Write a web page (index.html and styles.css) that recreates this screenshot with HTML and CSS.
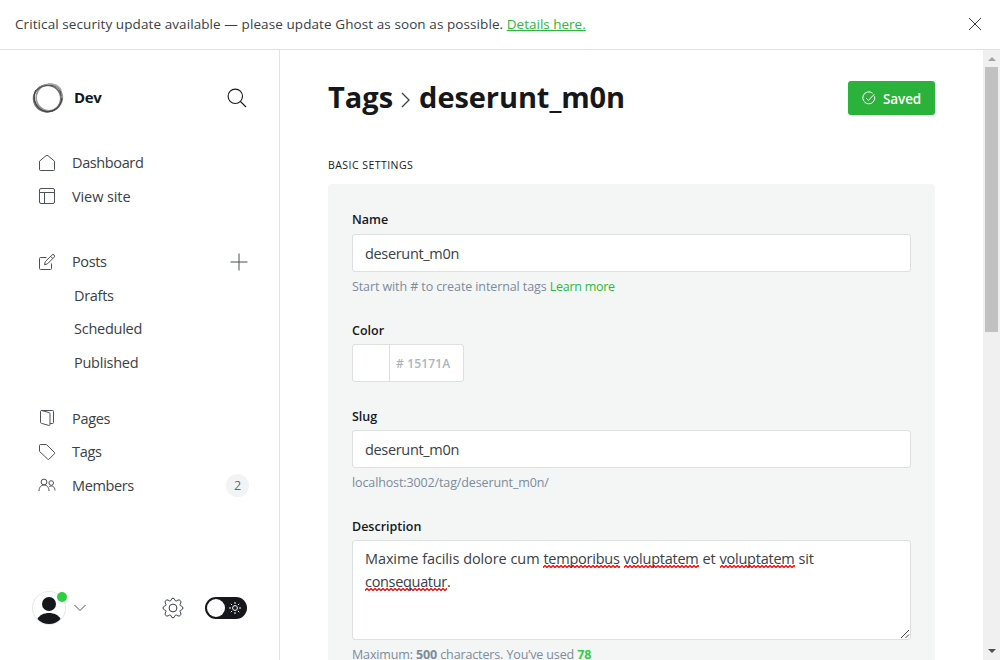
FILE: index.html
```html
<!DOCTYPE html>
<html lang="en">
<head>
<meta charset="utf-8">
<title>Tags - deserunt_m0n</title>
<link rel="stylesheet" href="styles.css">
</head>
<body>
<div class="app">
  <header class="notice">
    <p class="notice-text"><span class="notice-copy">Critical security update available — please update Ghost as soon as possible.</span> <a class="notice-link" href="#">Details here.</a></p>
    <svg class="notice-close" viewBox="0 0 14 14"><path d="M1 1l12 12M13 1L1 13"/></svg>
  </header>
  <div class="body">
    <nav class="sidebar">
      <div class="site">
        <svg class="site-logo" viewBox="0 0 32 32" fill="none">
          <ellipse cx="15.500" cy="16.300" rx="13.600" ry="13.200" stroke="#666" stroke-width="1.600"/>
          <ellipse cx="15" cy="16.600" rx="13.600" ry="13.400" stroke="#777" stroke-width="1.300"/>
          <ellipse cx="17.300" cy="15.500" rx="13" ry="13.300" stroke="#999" stroke-width="1.600" transform="rotate(30 17.300 15.500)"/>
          <path d="M4 8C-1 17 5 28 14 29.500C22 30.500 29 25 30 16" stroke="#444" stroke-width="1.300"/>
          <path d="M5 8C11 2 18 3 23 4C27 5 29 9 29 14" stroke="#555" stroke-width="1.100"/>
          <path d="M16 2C22 1.500 26 3.500 29 8" stroke="#aaa" stroke-width="1.800"/>
        </svg>
        <span class="site-name">Dev</span>
        <svg class="icon search" viewBox="0 0 20 20"><circle cx="8.300" cy="8.300" r="7.200"/><path d="M13.500 13.500l5.500 5.500"/></svg>
      </div>
      <ul class="nav">
        <li class="nav-item"><svg class="icon" viewBox="0 0 18 18"><path d="M1.500 7.200v8.300a1 1 0 0 0 1 1h13a1 1 0 0 0 1-1V7.200L10 1.700a1.500 1.500 0 0 0-2 0z"/></svg><span class="t-dashboard">Dashboard</span></li>
        <li class="nav-item"><svg class="icon" viewBox="0 0 18 18"><rect x="1.500" y="1.500" width="15" height="15" rx="1.500"/><path d="M1.500 5.500h15M6.500 5.500v11"/></svg><span class="t-view">View site</span></li>
      </ul>
      <ul class="nav">
        <li class="nav-item"><svg class="icon" viewBox="0 0 18 18"><path d="M8.500 4.500h-6a1 1 0 0 0-1 1v10a1 1 0 0 0 1 1h10a1 1 0 0 0 1-1v-5"/><path d="M6.500 11.700l.700-3 6.700-6.700a1.400 1.400 0 0 1 2.200 2.200l-6.700 6.700zM12.600 3.300l2.200 2.200"/></svg><span class="t-posts">Posts</span><svg class="icon plus" viewBox="0 0 18 18"><path d="M9 .500v17M.500 9h17"/></svg></li>
        <li class="nav-item sub"><span class="t-drafts">Drafts</span></li>
        <li class="nav-item sub"><span class="t-scheduled">Scheduled</span></li>
        <li class="nav-item sub"><span class="t-published">Published</span></li>
      </ul>
      <ul class="nav">
        <li class="nav-item"><svg class="icon" viewBox="0 0 18 18"><path d="M3.500 1.500h11a1 1 0 0 1 1 1v11a1 1 0 0 1-1 1h-2.500M3.500 1.500a1 1 0 0 0-1 1v10.800a1 1 0 0 0 .8 1l7.500 2.100a1 1 0 0 0 1.200-1V4.600a1 1 0 0 0-.8-1z"/></svg><span class="t-pages">Pages</span></li>
        <li class="nav-item"><svg class="icon" viewBox="0 0 18 18"><path d="M1.500 2.500a1 1 0 0 1 1-1H8a1 1 0 0 1 .7.300l7.700 7.600a1 1 0 0 1 0 1.400l-5.300 5.300a1 1 0 0 1-1.400 0L1.800 8.700a1 1 0 0 1-.3-.700z"/></svg><span class="t-tags">Tags</span></li>
        <li class="nav-item"><svg class="icon" viewBox="0 0 18 18"><circle cx="6" cy="6" r="2.900"/><circle cx="13.200" cy="7" r="2.300"/><path d="M1 15c0-3.800 2.200-6 5-6s5 2.200 5 6M11.300 10.600c3-1.700 5.700.400 5.700 3.900"/></svg><span class="t-members">Members</span><span class="count">2</span></li>
      </ul>
      <div class="account">
        <div class="avatar">
          <svg class="avatar-art" viewBox="0 0 34 34"><circle cx="17" cy="17" r="16.500" fill="#fff" stroke="#e5e7e9"/><circle cx="17" cy="13" r="7" fill="#15171a"/><path d="M5.500 28C9 20 25 20 28.500 28Q24 33 17 33T5.500 28z" fill="#15171a"/></svg>
          <span class="avatar-dot"></span>
        </div>
        <svg class="icon chevron" viewBox="0 0 12 8"><path d="M.500 1l5.500 5.500L11.500 1"/></svg>
        <svg class="icon gear" viewBox="0 0 22 22"><circle cx="11" cy="11" r="3.900"/><path d="M9.200 2.900Q9.500 1.200 11 1.200T12.800 2.900Q13.200 4.400 14.600 3.900L15.900 3.100Q17.300 2.500 18.300 3.600T18.700 6.100Q17.500 7.600 18.300 8.600L19.700 9.200Q20.900 9.700 20.900 11T19.700 12.800L18.300 13.400Q17.500 14.400 18.700 15.900Q19.300 17.300 18.300 18.400T15.900 18.900L14.600 18.100Q13.200 17.600 12.800 19.100Q12.500 20.800 11 20.800T9.200 19.100Q8.800 17.600 7.400 18.100L6.100 18.900Q4.700 19.500 3.700 18.400T3.300 15.900Q4.500 14.400 3.700 13.400L2.300 12.800Q1.100 12.300 1.100 11T2.300 9.200L3.700 8.600Q4.500 7.600 3.300 6.100Q2.700 4.700 3.700 3.600T6.100 3.100L7.400 3.900Q8.800 4.400 9.200 2.900z"/></svg>
        <div class="toggle"><span class="knob"></span><svg class="sun" viewBox="0 0 14 14"><circle cx="7" cy="7" r="2.400"/><path d="M7 1v2M7 11v2M1 7h2M11 7h2M2.800 2.800l1.300 1.300M9.900 9.900l1.300 1.300M11.200 2.800L9.900 4.100M4.100 9.900l-1.300 1.300"/></svg></div>
      </div>
    </nav>
    <main class="main">
      <div class="title-row">
        <h1 class="title"><span class="title-tags">Tags</span><svg class="crumb" viewBox="0 0 10 16"><path d="M1 1l7 7-7 7"/></svg><span class="title-name">deserunt_m0n</span></h1>
        <button class="save"><svg class="check" viewBox="0 0 14 14"><path d="M12.600 5.300A6 6 0 1 1 10.600 2.200M4 7l2.400 2.400 6-6.200"/></svg><span class="save-text">Saved</span></button>
      </div>
      <h4 class="section">BASIC SETTINGS</h4>
      <form class="panel">
        <label class="label l-name">Name</label>
        <div class="input"><span class="value">deserunt_m0n</span></div>
        <p class="hint"><span class="hint-start">Start with # to create internal tags</span> <a class="learn" href="#">Learn more</a></p>
        <label class="label l-color">Color</label>
        <div class="color"><span class="swatch"></span><span class="hex"># 15171A</span></div>
        <label class="label l-slug">Slug</label>
        <div class="input"><span class="value">deserunt_m0n</span></div>
        <p class="hint"><span class="hint-url">localhost:3002/tag/deserunt_m0n/</span></p>
        <label class="label l-desc">Description</label>
        <div class="textarea">
          <div class="line1">Maxime facilis dolore cum <span class="typo">temporibus</span> <span class="typo">voluptatem</span> et <span class="typo">voluptatem</span> sit</div>
          <div class="line2"><span class="typo">consequatur</span>.</div>
          <svg class="grip" viewBox="0 0 10 10"><path d="M1 9l8-8M5.500 9L9 5.500"/></svg>
        </div>
        <p class="hint last"><span class="hint-max">Maximum: <b>500</b> characters. You’ve used <b class="used">78</b></span></p>
      </form>
    </main>
    <div class="scrollbar"><span class="arrow up"></span><span class="thumb"></span><span class="arrow down"></span></div>
  </div>
</div>
</body>
</html>
```
FILE: styles.css
```css
* { box-sizing: border-box; }
body { margin: 0; font-family: "Open Sans", "Noto Sans", sans-serif; color: #394047; background: #fff; }
p, h1, h4, ul { margin: 0; padding: 0; }
ul { list-style: none; }
span, label, a { white-space: nowrap; }
.app { display: flex; flex-direction: column; width: 1000px; height: 660px; overflow: hidden; }
.notice { flex: none; display: flex; align-items: center; justify-content: space-between; height: 50px; padding: 0 18px 1px 15px; border-bottom: 1px solid #dfe1e3; font-size: 13.5px; }
.notice-text { line-height: 20px; white-space: nowrap; }
.notice-copy { letter-spacing: 0.087px; }
.notice-link { color: #2db83d; }
.notice-close { width: 14px; height: 14px; stroke: #394047; stroke-width: 1; fill: none; }
.body { flex: 1; display: flex; min-height: 0; }
.icon { flex: none; width: 18px; height: 18px; fill: none; stroke: #4b5157; stroke-width: 1; stroke-linejoin: round; }

.sidebar { flex: none; display: flex; flex-direction: column; width: 280px; border-right: 1px solid #e1e4e6; }
.site { display: flex; align-items: center; height: 32px; margin: 32px 32px; }
.site-logo { width: 32px; height: 32px; margin-right: 10px; }
.site-name { padding-bottom: 3px; font-size: 15px; font-weight: 700; letter-spacing: -0.3px; color: #15171a; }
.search { width: 20px; height: 20px; margin-left: auto; stroke: #15171a; stroke-width: 1.1; }
.nav { margin-bottom: 32px; padding: 0 30px 0 38px; font-size: 14.5px; letter-spacing: -0.3px; }
.nav-item { display: flex; align-items: center; height: 33.5px; gap: 16px; }
.t-dashboard, .t-posts, .t-members { letter-spacing: -0.38px; }
.t-view { letter-spacing: -0.1px; }
.t-scheduled, .t-published { letter-spacing: -0.25px; }
.sub { padding-left: 36px; }
.plus { margin-left: auto; margin-right: 1px; }
.nav + .nav { margin-bottom: 22.7px; }
.count { display: flex; align-items: center; justify-content: center; width: 23px; height: 23px; margin-left: auto; border-radius: 50%; background: #f1f3f5; font-size: 12.5px; letter-spacing: 0; color: #5d6873; }
.account { display: flex; align-items: center; height: 34px; margin: auto 32px 35px; }
.nav + .account { margin-top: auto; }
.avatar { position: relative; width: 34px; height: 34px; }
.avatar-art { display: block; width: 34px; height: 34px; }
.avatar-dot { position: absolute; top: 1px; right: -1px; width: 10px; height: 10px; border-radius: 50%; background: #30cf43; }
.chevron { width: 12px; height: 8px; margin-left: 8px; }
.gear { width: 22px; height: 22px; margin-left: 76px; stroke: #394047; }
.toggle { display: flex; align-items: center; justify-content: space-between; width: 42px; height: 22px; margin-left: 21px; padding: 0 5px 0 2px; border-radius: 11px; background: #15171a; }
.knob { width: 18px; height: 18px; border-radius: 50%; background: #fff; }
.sun { width: 14px; height: 14px; stroke: #fff; fill: none; stroke-width: 1; }

.main { flex: 1; min-width: 0; padding: 30px 48px 0; }
.title-row { display: flex; align-items: center; justify-content: space-between; height: 36px; }
.title { display: flex; align-items: center; height: 36px; padding-bottom: 2px; font-size: 29px; font-weight: 700; line-height: 34px; color: #15171a; }
.title-name { letter-spacing: -0.08px; }
.crumb { width: 10px; height: 16px; margin: 6px 8px 0 8px; fill: none; stroke: #394047; stroke-width: 1.3; }
.save { display: flex; align-items: center; width: 87px; height: 34px; padding: 0 0 0 14px; border: 0; border-radius: 3px; background: #2ab23a; color: #fff; font: 600 13.5px "Open Sans", sans-serif; gap: 7px; }
.save-text { padding-top: 2px; letter-spacing: -0.1px; }
.check { width: 14px; height: 14px; fill: none; stroke: #fff; stroke-width: 1; }
.section { margin-top: 39px; height: 20px; font-size: 10.5px; font-weight: 400; line-height: 20px; letter-spacing: 0.46px; color: #15171a; }
.panel { margin-top: 9px; padding: 24px; height: 500px; border-radius: 4px; background: #f4f6f6; }
.label { display: block; height: 20px; margin-bottom: 6px; font-size: 12.5px; font-weight: 600; line-height: 26px; color: #15171a; }
.l-name { line-height: 24px; }
.input { display: flex; align-items: center; height: 38px; padding-left: 12px; border: 1px solid #dce0e0; border-radius: 3px; background: #fff; font-size: 14.5px; letter-spacing: -0.33px; }
.hint { height: 20px; margin: 5px 0 21px; font-size: 12.5px; line-height: 19px; letter-spacing: -0.1px; color: #7c8b9a; white-space: nowrap; }
.hint-url { letter-spacing: -0.12px; }
.hint-max { letter-spacing: -0.13px; }
.learn { color: #2db83d; text-decoration: none; letter-spacing: -0.27px; }
.color { display: flex; width: 112px; height: 38px; margin-bottom: 22px; border: 1px solid #dce0e0; border-radius: 3px; background: #fff; }
.swatch { width: 37px; border-right: 1px solid #dce0e0; }
.hex { padding-left: 6px; font-size: 12px; font-weight: 600; line-height: 38px; letter-spacing: 0.15px; color: #abb4be; }
.textarea { position: relative; height: 100px; padding: 6px 12px; border: 1px solid #dce0e0; border-radius: 3px; background: #fff; font-size: 14.5px; line-height: 23px; letter-spacing: -0.11px; word-spacing: 0.3px; white-space: nowrap; }
.typo { padding-bottom: 1px; letter-spacing: -0.24px; background: url("data:image/svg+xml,%3Csvg xmlns='http://www.w3.org/2000/svg' width='4' height='3'%3E%3Cpath d='M-1 1.500L0 2.500L2 .500L4 2.500L5 1.500' fill='none' stroke='%23f00' stroke-width='1.300'/%3E%3C/svg%3E") 0 calc(100% - 1px) / 4px 3px repeat-x; }
.line2 .typo { letter-spacing: -0.32px; }
.grip { position: absolute; right: 0; bottom: 0; width: 10px; height: 10px; stroke: #444; fill: none; }
.used { color: #30cf43; }

.scrollbar { flex: none; display: flex; flex-direction: column; align-items: center; width: 17px; background: #f0f0f0; padding: 7px 2px; }
.arrow { border: 4px solid transparent; }
.up { border-top: 0; border-bottom-color: #a3a3a3; }
.down { margin-top: auto; border-bottom: 0; border-top-color: #505050; }
.thumb { width: 13px; height: 265px; margin-top: 6px; background: #c1c1c1; }
```
